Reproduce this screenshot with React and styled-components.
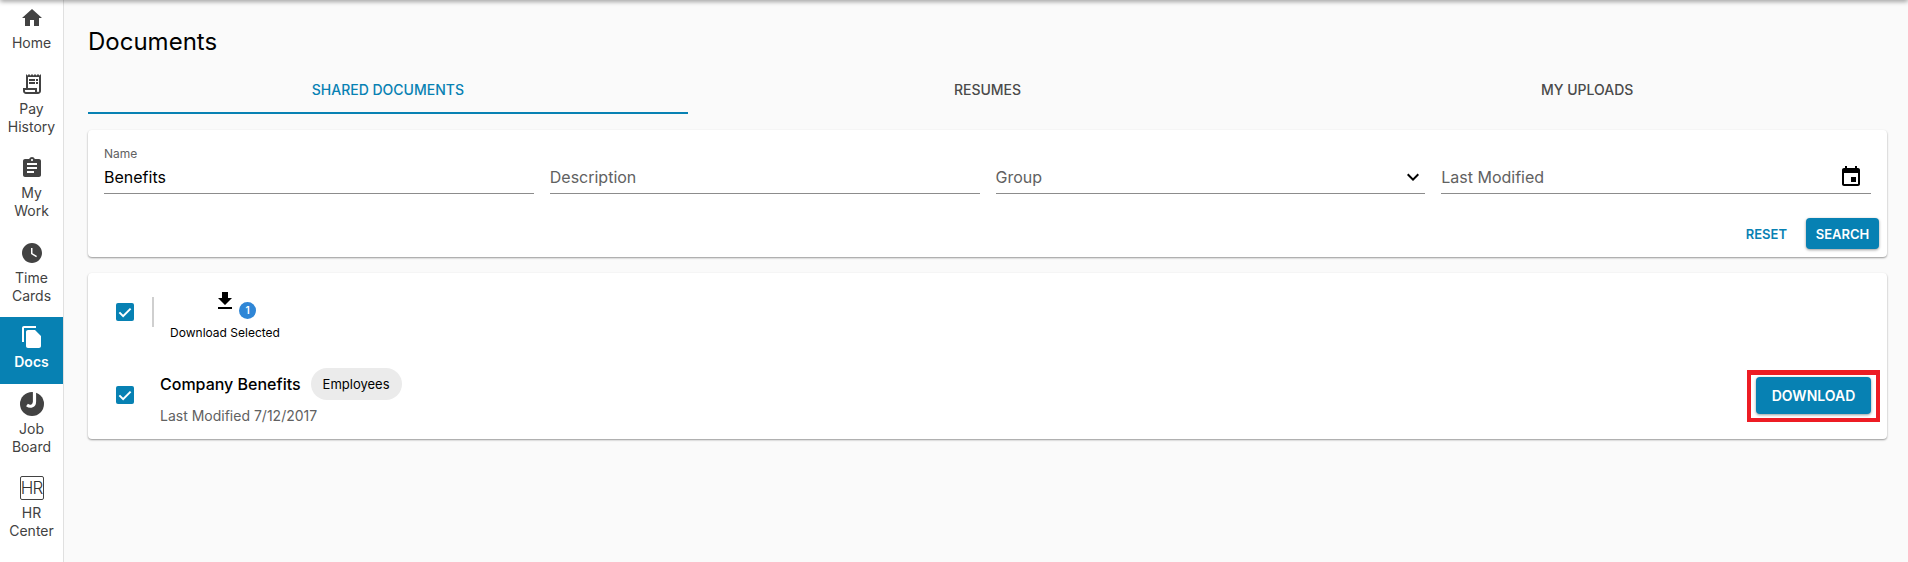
import React from 'react'
import styled, { createGlobalStyle } from 'styled-components'

const PRIMARY = '#0781b3'
const FONT = "Inter, 'Noto Sans', sans-serif"

const GlobalStyle = createGlobalStyle`
  html, body {
    margin: 0;
    height: 100%;
    overflow: hidden;
    background: #fafafa;
    font-family: ${FONT};
  }
  * { box-sizing: border-box; }
`

const Page = styled.div`
  position: relative;
  display: flex;
  width: 1908px;
  height: 562px;
  overflow: hidden;

  &::before {
    content: '';
    position: absolute;
    top: -4px;
    left: 0;
    right: 0;
    height: 4px;
    box-shadow: 0 1px 5px rgba(0, 0, 0, 0.5);
    z-index: 3;
  }
`

const Sidebar = styled.nav`
  flex: 0 0 64px;
  height: 562px;
  background: #fff;
  border-right: 1px solid #e0e0e0;
  overflow: hidden;
`

const NavList = styled.div`
  display: flex;
  flex-direction: column;
  margin-top: -2.5px;
`

const NavItem = styled.a`
  display: flex;
  flex-direction: column;
  align-items: center;
  height: ${p => (p.$lines === 2 ? '84.4px' : '66.5px')};
  padding-top: 8px;
  font-size: 14px;
  line-height: 18px;
  text-align: center;
  color: ${p => (p.$active ? '#fff' : '#424242')};
  font-weight: ${p => (p.$active ? 600 : 400)};
  background: ${p => (p.$active ? PRIMARY : 'transparent')};

  & svg {
    width: 24px;
    height: 24px;
    margin-bottom: 4px;
    fill: currentColor;
    flex: none;
  }
`

const HrMark = styled.span`
  display: flex;
  align-items: center;
  justify-content: center;
  flex: none;
  width: 24px;
  height: 24px;
  margin-bottom: 4px;
  border: 1px solid #424242;
  border-radius: 2px;
  font-size: 17px;
  font-weight: 300;
  line-height: 22px;
  letter-spacing: -1px;
  color: #333;
`

const Main = styled.main`
  flex: 1;
  min-width: 0;
  padding: 25px 21px 0 24px;
`

const Title = styled.h1`
  margin: 0;
  font-size: 24px;
  line-height: 34px;
  font-weight: 400;
  color: #000;
`

const Tabs = styled.div`
  display: flex;
  margin-top: 8px;
`

const Tab = styled.div`
  flex: 1;
  height: 47px;
  padding-top: 14px;
  text-align: center;
  font-size: 14px;
  line-height: 18px;
  font-weight: 500;
  color: ${p => (p.$active ? PRIMARY : '#4a4a4a')};
  border-bottom: 2px solid ${p => (p.$active ? PRIMARY : 'transparent')};
`

const Card = styled.section`
  background: #fff;
  border-radius: 4px;
  box-shadow: 0 1px 2px rgba(0, 0, 0, 0.4);
`

const FilterCard = styled(Card)`
  height: 127px;
  margin-top: 16px;
  padding: 16px;
`

const FilterRow = styled.div`
  display: grid;
  grid-template-columns: repeat(4, 1fr);
  column-gap: 16px;
`

const Field = styled.div`
  position: relative;
  display: flex;
  align-items: center;
  justify-content: space-between;
  height: 48px;
  padding-top: 15px;
  font-size: 16px;
  color: ${p => (p.$filled ? '#000' : '#616161')};
  border-bottom: 1px solid #8c8c8c;

  & svg {
    width: 24px;
    height: 24px;
    margin-right: ${p => p.$iconInset || 0}px;
    color: #000;
    fill: currentColor;
  }
`

const FieldLabel = styled.label`
  position: absolute;
  top: 0;
  left: 0;
  font-size: 12px;
  line-height: 16px;
  color: #616161;
`

const FilterActions = styled.div`
  display: flex;
  justify-content: flex-end;
  align-items: center;
  gap: 8px;
  margin: 24px -8px 0 0;
`

const TextButton = styled.button`
  height: 31px;
  padding: 0 11px;
  border: 0;
  background: none;
  font: 600 13px ${FONT};
  color: ${PRIMARY};
`

const SolidButton = styled.button`
  height: ${p => (p.$large ? '37px' : '31px')};
  padding: 0;
  width: ${p => (p.$large ? '115px' : '73px')};
  border: 0;
  border-radius: 4px;
  background: ${PRIMARY};
  color: #fff;
  font: 600 ${p => (p.$large ? '14px' : '13px')} ${FONT};
  box-shadow: 0 1px 3px rgba(0, 0, 0, 0.4);
`

const ResultCard = styled(Card)`
  height: 166px;
  margin-top: 16px;
  padding: 0 16px 0 28px;
`

const SelectionBar = styled.div`
  display: flex;
  align-items: flex-start;
  height: 88px;
  padding-top: 15px;
`

const Check = styled.span`
  display: flex;
  align-items: center;
  justify-content: center;
  flex: none;
  width: 18px;
  height: 18px;
  border-radius: 2px;
  background: ${PRIMARY};

  & svg {
    width: 18px;
    height: 18px;
    fill: none;
    stroke: #fff;
    stroke-width: 2.7;
  }
`

const BarCheck = styled(Check)`
  margin-top: 15px;
`

const RowCheck = styled(Check)`
  margin-bottom: 3px;
`

const Divider = styled.span`
  flex: none;
  width: 2px;
  height: 30px;
  margin: 9px 0 0 18px;
  background: #cfcfcf;
`

const BulkAction = styled.div`
  display: flex;
  flex-direction: column;
  align-items: center;
  width: 142px;
  padding-top: 1px;
  font-size: 12px;
  line-height: 16px;
  color: #000;
`

const BulkIcon = styled.div`
  position: relative;
  height: 24px;
  margin: 0 0 12px;

  & > svg {
    display: block;
    width: 24px;
    height: 24px;
    fill: #000;
  }
`

const Badge = styled.span`
  position: absolute;
  left: 26px;
  top: 13px;
  width: 17px;
  height: 17px;
  border-radius: 50%;
  background: #2f86d6;
  color: #fff;
  font-size: 10px;
  font-weight: 600;
  line-height: 17px;
  text-align: center;
`

const DocRow = styled.div`
  display: flex;
  align-items: center;
  padding-top: 7px;
`

const DocInfo = styled.div`
  flex: 1;
  margin-left: 26px;
`

const DocHead = styled.div`
  display: flex;
  align-items: center;
  gap: 10px;
`

const DocName = styled.span`
  font-size: 16px;
  font-weight: 500;
  color: #000;
`

const Chip = styled.span`
  height: 32px;
  padding: 0 12px;
  border-radius: 16px;
  background: #ebebeb;
  font-size: 13px;
  line-height: 32px;
  color: #000;
`

const DocDate = styled.div`
  margin-top: 7px;
  font-size: 14px;
  line-height: 18px;
  color: #616161;
`

/* red annotation drawn round the button in the screenshot */
const Highlight = styled.div`
  margin: 0 -9px 1px 0;
  padding: 2px 5px 4px;
  border: 4px solid #ed1c24;
  border-top-width: 5px;
`

const HomeIcon = () => <svg viewBox="0 0 24 24"><path d="M10 20v-6h4v6h5v-8h3L12 3 2 12h3v8z" /></svg>
const ReceiptIcon = () => (
  <svg viewBox="0 0 24 24">
    <path d="M19.5 3.5 18 2l-1.5 1.5L15 2l-1.5 1.5L12 2l-1.5 1.5L9 2 7.5 3.5 6 2v14H3v3c0 1.66 1.34 3 3 3h12c1.66 0 3-1.34 3-3V2l-1.5 1.5zM15 20H6c-.55 0-1-.45-1-1v-1h10v2zm4-1c0 .55-.45 1-1 1s-1-.45-1-1v-3H8V5h11v14z" />
    <path d="M9 7h6v2H9zM16 7h2v2h-2zM9 10h6v2H9zM16 10h2v2h-2z" />
  </svg>
)
const AssignmentIcon = () => <svg viewBox="0 0 24 24"><path d="M19 3h-4.18C14.4 1.84 13.3 1 12 1c-1.3 0-2.4.84-2.82 2H5c-1.1 0-2 .9-2 2v14c0 1.1.9 2 2 2h14c1.1 0 2-.9 2-2V5c0-1.1-.9-2-2-2zm-7 0c.55 0 1 .45 1 1s-.45 1-1 1-1-.45-1-1 .45-1 1-1zm2 14H7v-2h7v2zm3-4H7v-2h10v2zm0-4H7V7h10v2z" /></svg>
const ClockIcon = () => <svg viewBox="0 0 24 24"><path d="M12 2C6.5 2 2 6.5 2 12s4.5 10 10 10 10-4.5 10-10S17.5 2 12 2zm4.2 14.2L11 13V7h1.5v5.2l4.5 2.7-.8 1.3z" /></svg>
const DocsIcon = () => <svg viewBox="0 0 24 24"><path d="M16 1H4c-1.1 0-2 .9-2 2v14h2V3h12V1zm-1 4l6 6v10c0 1.1-.9 2-2 2H7.99C6.89 23 6 22.1 6 21l.01-14c0-1.1.89-2 1.99-2h7z" /></svg>
const JobIcon = () => (
  <svg viewBox="0 0 24 24">
    <circle cx="12" cy="12" r="12" />
    <path d="M14.5 -1V9.5C14.5 14 10.5 15.5 7 13" fill="none" stroke="#fff" strokeWidth="3.2" />
  </svg>
)
const ChevronIcon = () => <svg viewBox="0 0 24 24"><path d="M7.41 8.59 12 13.17l4.59-4.58L18 10l-6 6-6-6z" /></svg>
const CalendarIcon = () => <svg viewBox="0 0 24 24"><path d="M17 12h-5v5h5v-5zM16 1v2H8V1H6v2H5c-1.11 0-1.99.9-1.99 2L3 19c0 1.1.89 2 2 2h14c1.1 0 2-.9 2-2V5c0-1.1-.9-2-2-2h-1V1h-2zm3 18H5V8h14v11z" /></svg>
const DownloadIcon = () => <svg viewBox="0 0 24 24"><path d="M19 9h-4V3H9v6H5l7 7 7-7zM5 18v2h14v-2H5z" /></svg>
const CheckMark = () => <svg viewBox="0 0 24 24"><path d="M4.5 12.5l5 5L19.5 7.5" /></svg>

const navItems = [
  { icon: <HomeIcon />, label: ['Home'] },
  { icon: <ReceiptIcon />, label: ['Pay', 'History'] },
  { icon: <AssignmentIcon />, label: ['My', 'Work'] },
  { icon: <ClockIcon />, label: ['Time', 'Cards'] },
  { icon: <DocsIcon />, label: ['Docs'], active: true },
  { icon: <JobIcon />, label: ['Job', 'Board'] },
  { icon: <HrMark>HR</HrMark>, label: ['HR', 'Center'] },
]

const tabs = ['SHARED DOCUMENTS', 'RESUMES', 'MY UPLOADS']

export default function App() {
  return (
    <Page>
      <GlobalStyle />
      <Sidebar>
        <NavList>
          {navItems.map((item, idx) => (
            <NavItem key={idx} $lines={item.label.length} $active={item.active}>
              {item.icon}
              {item.label.map(line => <span key={line}>{line}</span>)}
            </NavItem>
          ))}
        </NavList>
      </Sidebar>
      <Main>
        <Title>Documents</Title>
        <Tabs>
          {tabs.map((tab, idx) => <Tab key={tab} $active={idx === 0}>{tab}</Tab>)}
        </Tabs>
        <FilterCard>
          <FilterRow>
            <Field $filled><FieldLabel>Name</FieldLabel>Benefits</Field>
            <Field>Description</Field>
            <Field>Group<ChevronIcon /></Field>
            <Field $iconInset={8}>Last Modified<CalendarIcon /></Field>
          </FilterRow>
          <FilterActions>
            <TextButton>RESET</TextButton>
            <SolidButton>SEARCH</SolidButton>
          </FilterActions>
        </FilterCard>
        <ResultCard>
          <SelectionBar>
            <BarCheck><CheckMark /></BarCheck>
            <Divider />
            <BulkAction>
              <BulkIcon><DownloadIcon /><Badge>1</Badge></BulkIcon>
              Download Selected
            </BulkAction>
          </SelectionBar>
          <DocRow>
            <RowCheck><CheckMark /></RowCheck>
            <DocInfo>
              <DocHead>
                <DocName>Company Benefits</DocName>
                <Chip>Employees</Chip>
              </DocHead>
              <DocDate>Last Modified 7/12/2017</DocDate>
            </DocInfo>
            <Highlight><SolidButton $large>DOWNLOAD</SolidButton></Highlight>
          </DocRow>
        </ResultCard>
      </Main>
    </Page>
  )
}
